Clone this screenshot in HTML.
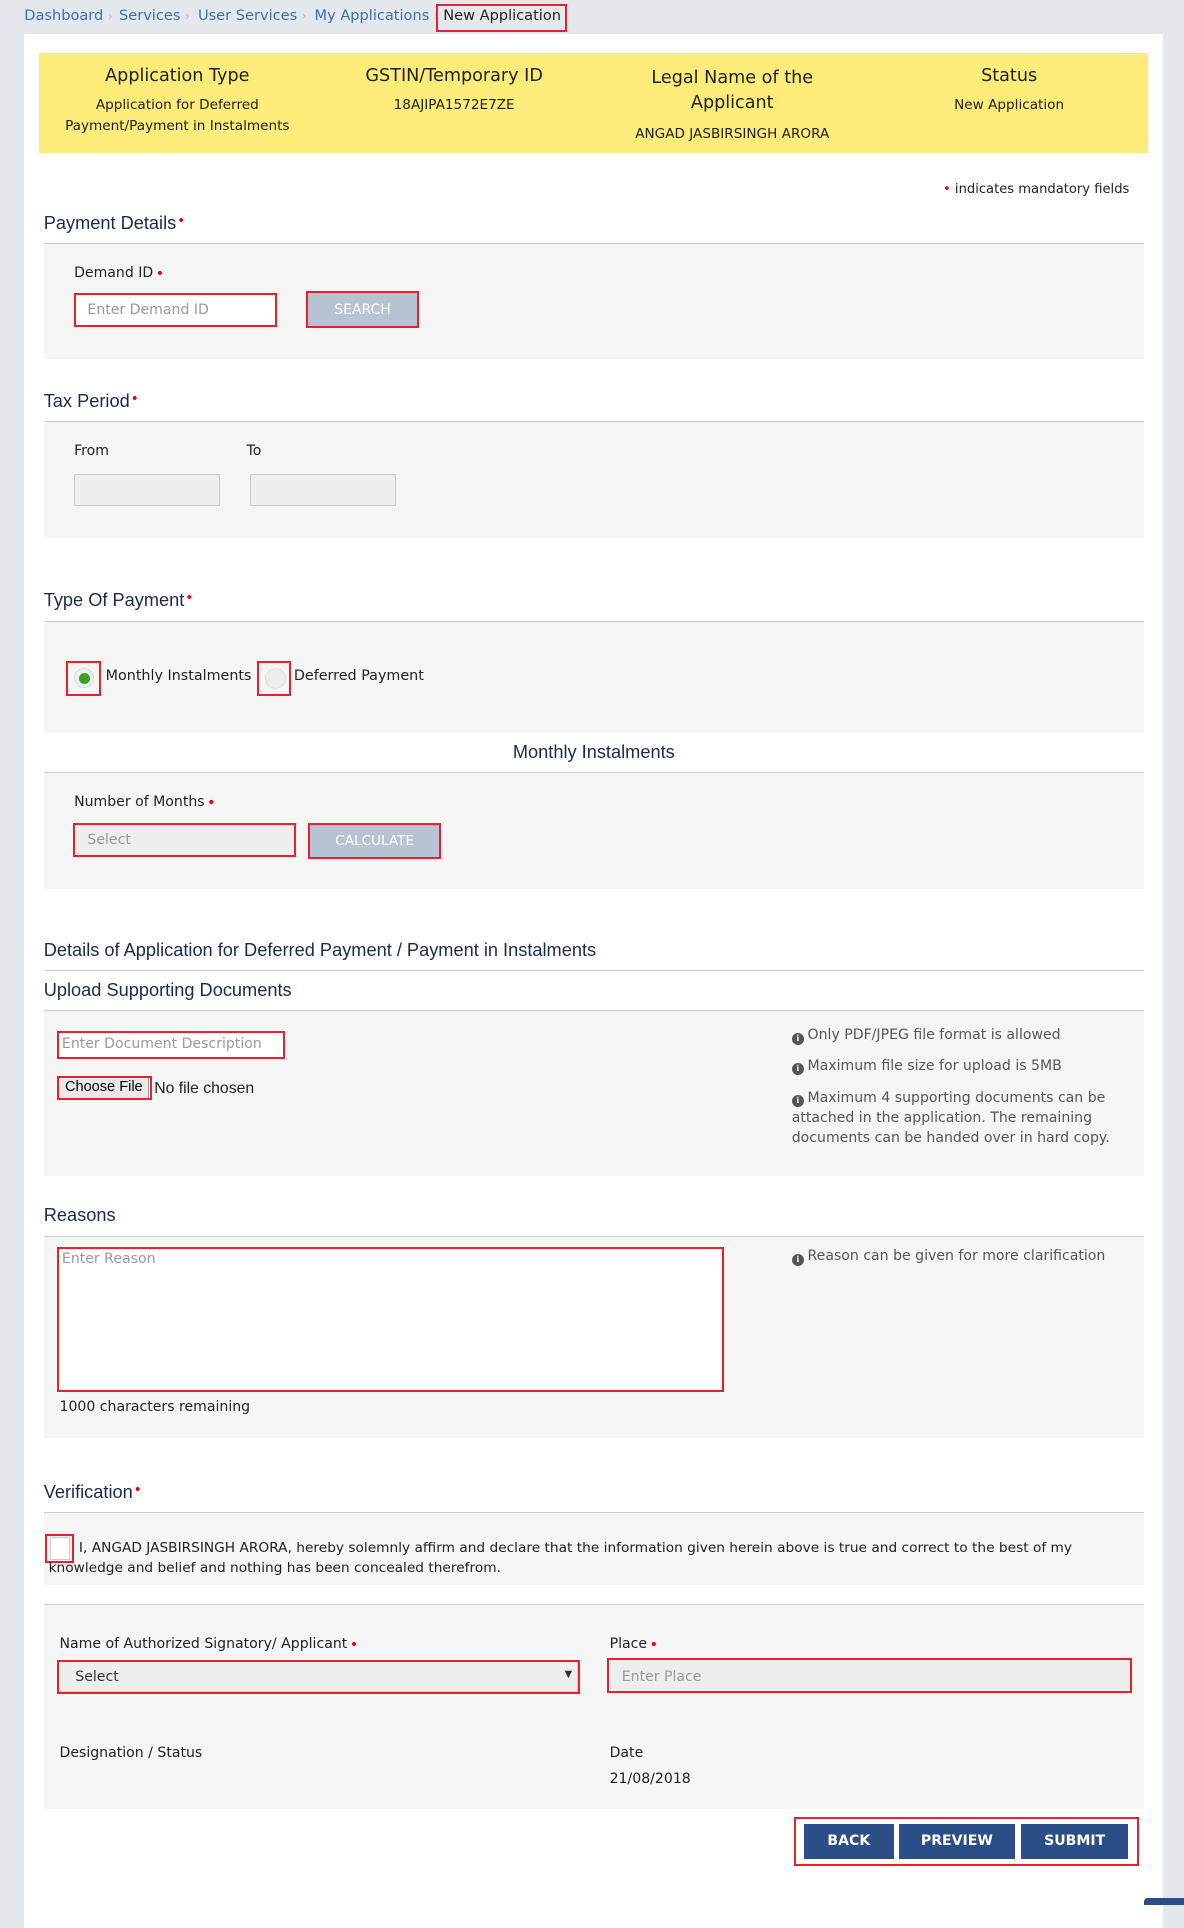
<!DOCTYPE html>
<html><head><meta charset="utf-8"><style>
html,body{margin:0;padding:0}
body{width:975px;height:1568px;zoom:1.21436;background:#e4e7eb;position:relative;overflow:hidden;font-family:"DejaVu Sans",Verdana,sans-serif;font-size:11.6px;color:#333}
.a{position:absolute;white-space:nowrap}
.card{position:absolute;left:20px;top:28px;width:938px;height:1560px;background:#fff}
.h{position:absolute;font-family:"Liberation Sans",Arial,sans-serif;font-size:15px;color:#1a2a4a;left:36px}
.req::after{content:"•";color:#e00;font-size:12px;vertical-align:top;margin-left:2px}
.box{position:absolute;left:36px;width:906px;background:#f5f5f5;border-top:1px solid #ccc}
.line{position:absolute;left:36px;width:906px;border-top:1px solid #ccc}
.red{position:absolute;border:2px solid #e8202a;box-sizing:border-box}
.bc{color:#3c6fae;font-size:12px;top:6px}
.sep{color:#bbb;font-size:10px}
.yc{position:absolute;text-align:center;width:228px;top:0}
.yt{font-size:14.5px;color:#222;margin-top:10px}
.yv{font-size:11.2px;color:#222;margin-top:8px;line-height:17px}
.inp{position:absolute;box-sizing:border-box;background:#eee;border:1px solid #ccc}
.note{font-size:11.6px;color:#555}
.btn{position:absolute;background:#2c4e86;color:#fff;font-size:11.6px;font-weight:bold;text-align:center;line-height:29px;top:1502px;height:29px}
i.ic{display:inline-block;width:10px;height:10px;border-radius:50%;background:#555;color:#fff;font-size:8px;line-height:10px;text-align:center;font-style:normal;font-weight:bold;vertical-align:-1px;margin-right:3px;font-family:"Liberation Serif",serif}
</style></head><body>
<div class="a bc" style="left:20px">Dashboard <span class="sep">›</span></div>
<div class="a bc" style="left:98px">Services <span class="sep">›</span></div>
<div class="a bc" style="left:163px">User Services <span class="sep">›</span></div>
<div class="a bc" style="left:259px">My Applications <span class="sep">›</span></div>
<div class="red" style="left:359px;top:3px;width:108px;height:23px"></div>
<div class="a" style="left:365px;top:6px;font-size:12px;color:#222">New Application</div>
<div class="card"></div>
<div style="position:absolute;left:32px;top:44px;width:913px;height:82px;background:#fdec7a">
 <div class="yc" style="left:0"><div class="yt">Application Type</div><div class="yv">Application for Deferred<br>Payment/Payment in Instalments</div></div>
 <div class="yc" style="left:228px"><div class="yt">GSTIN/Temporary ID</div><div class="yv">18AJIPA1572E7ZE</div></div>
 <div class="yc" style="left:457px"><div class="yt" style="line-height:21px">Legal Name of the<br>Applicant</div><div class="yv" style="margin-top:6px">ANGAD JASBIRSINGH ARORA</div></div>
 <div class="yc" style="left:685px"><div class="yt">Status</div><div class="yv">New Application</div></div>
</div>
<div class="a" style="right:45px;top:150px;font-size:10.8px;color:#222"><span style="color:#e00">•</span> indicates mandatory fields</div>

<div class="h req" style="top:175px">Payment Details</div>
<div class="box" style="top:200px;height:95px"></div>
<div class="a req" style="left:61px;top:218px;color:#222">Demand ID</div>
<div class="inp" style="left:61px;top:241px;width:166px;height:28px;background:#fff"></div>
<div class="red" style="left:61px;top:241px;width:167px;height:28px"></div>
<div class="a" style="left:72px;top:249px;color:#999">Enter Demand ID</div>
<div class="a" style="left:253px;top:241px;width:91px;height:28px;background:#b7c2d3;color:#fff;text-align:center;line-height:28px;font-size:11.5px">SEARCH</div>
<div class="red" style="left:252px;top:240px;width:93px;height:30px"></div>

<div class="h req" style="top:322px">Tax Period</div>
<div class="box" style="top:347px;height:95px"></div>
<div class="a" style="left:61px;top:365px;color:#222">From</div>
<div class="a" style="left:203px;top:365px;color:#222">To</div>
<div class="inp" style="left:61px;top:390px;width:120px;height:27px"></div>
<div class="inp" style="left:206px;top:390px;width:120px;height:27px"></div>

<div class="h req" style="top:486px">Type Of Payment</div>
<div class="box" style="top:511px;height:92px"></div>
<div class="red" style="left:54px;top:544px;width:29px;height:29px"></div>
<div class="a" style="left:61px;top:550px;width:15px;height:15px;border-radius:50%;background:#eee;border:1px solid #cde"></div>
<div class="a" style="left:65px;top:554px;width:9px;height:9px;border-radius:50%;background:#3aa021"></div>
<div class="a" style="left:87px;top:550px;font-size:11.8px;color:#222">Monthly Instalments</div>
<div class="red" style="left:212px;top:544px;width:28px;height:29px"></div>
<div class="a" style="left:218px;top:550px;width:16px;height:16px;border-radius:50%;background:#eee;border:1px solid #ddd"></div>
<div class="a" style="left:242px;top:550px;font-size:11.8px;color:#222">Deferred Payment</div>

<div class="a" style="left:36px;width:906px;text-align:center;top:611px;font-family:'Liberation Sans',Arial,sans-serif;font-size:15px;color:#1a2a4a">Monthly Instalments</div>
<div class="box" style="top:636px;height:95px"></div>
<div class="a req" style="left:61px;top:654px;color:#222">Number of Months</div>
<div class="inp" style="left:60px;top:678px;width:183px;height:27px"></div>
<div class="red" style="left:60px;top:678px;width:184px;height:28px"></div>
<div class="a" style="left:72px;top:685px;color:#999">Select</div>
<div class="a" style="left:255px;top:679px;width:107px;height:27px;background:#b7c2d3;color:#fff;text-align:center;line-height:27px;font-size:11.2px">CALCULATE</div>
<div class="red" style="left:254px;top:678px;width:109px;height:29px"></div>

<div class="h" style="top:774px">Details of Application for Deferred Payment / Payment in Instalments</div>
<div class="line" style="top:799px"></div>
<div class="h" style="top:807px">Upload Supporting Documents</div>
<div class="box" style="top:832px;height:136px"></div>
<div class="inp" style="left:47px;top:849px;width:187px;height:22px;background:#fff;border:none"></div>
<div class="red" style="left:47px;top:849px;width:188px;height:23px"></div>
<div class="a" style="left:51px;top:853px;color:#999">Enter Document Description</div>
<div class="a" style="left:48px;top:887px;width:75px;height:18px;background:#e9e9e9;border:1px solid #999;box-sizing:border-box;font-family:'Liberation Sans',Arial,sans-serif;font-size:12px;text-align:center;line-height:16px;color:#000">Choose File</div>
<div class="red" style="left:47px;top:886px;width:78px;height:20px"></div>
<div class="a" style="left:127px;top:889px;font-family:'Liberation Sans',Arial,sans-serif;font-size:13px;color:#222">No file chosen</div>
<div class="a note" style="left:652px;top:846px"><i class="ic">i</i>Only PDF/JPEG file format is allowed</div>
<div class="a note" style="left:652px;top:871px"><i class="ic">i</i>Maximum file size for upload is 5MB</div>
<div class="a note" style="left:652px;top:896px;line-height:16.5px"><i class="ic">i</i>Maximum 4 supporting documents can be<br>attached in the application. The remaining<br>documents can be handed over in hard copy.</div>

<div class="h" style="top:992px">Reasons</div>
<div class="box" style="top:1018px;height:165px"></div>
<div class="inp" style="left:47px;top:1027px;width:548px;height:118px;background:#fff;border:none"></div>
<div class="red" style="left:47px;top:1027px;width:549px;height:119px"></div>
<div class="a" style="left:51px;top:1030px;color:#999">Enter Reason</div>
<div class="a" style="left:49px;top:1152px;color:#222">1000 characters remaining</div>
<div class="a note" style="left:652px;top:1028px"><i class="ic">i</i>Reason can be given for more clarification</div>

<div class="h req" style="top:1220px">Verification</div>
<div class="box" style="top:1245px;height:59px"></div>
<div class="a" style="left:41px;top:1266px;width:15px;height:17px;background:#fff;border:1px solid #ccc"></div>
<div class="red" style="left:37px;top:1263px;width:24px;height:24px"></div>
<div class="a" style="left:65px;top:1268px;color:#222;font-size:11.3px">I, ANGAD JASBIRSINGH ARORA, hereby solemnly affirm and declare that the information given herein above is true and correct to the best of my</div>
<div class="a" style="left:40px;top:1285px;color:#222;font-size:11.3px">knowledge and belief and nothing has been concealed therefrom.</div>

<div class="box" style="top:1321px;height:168px"></div>
<div class="a req" style="left:49px;top:1347px;color:#222">Name of Authorized Signatory/ Applicant</div>
<div class="inp" style="left:48px;top:1368px;width:428px;height:25px"></div>
<div class="red" style="left:47px;top:1367px;width:431px;height:28px"></div>
<div class="a" style="left:62px;top:1374px;color:#333">Select</div>
<div class="a" style="left:465px;top:1374px;font-size:8px;color:#333">▼</div>
<div class="a req" style="left:502px;top:1347px;color:#222">Place</div>
<div class="inp" style="left:501px;top:1366px;width:430px;height:27px"></div>
<div class="red" style="left:500px;top:1365px;width:432px;height:29px"></div>
<div class="a" style="left:512px;top:1374px;color:#999">Enter Place</div>
<div class="a" style="left:49px;top:1437px;color:#222">Designation / Status</div>
<div class="a" style="left:502px;top:1437px;color:#222">Date</div>
<div class="a" style="left:502px;top:1458px;color:#222">21/08/2018</div>

<div class="red" style="left:654px;top:1496px;width:284px;height:41px"></div>
<div class="btn" style="left:662px;width:74px">BACK</div>
<div class="btn" style="left:740px;width:96px">PREVIEW</div>
<div class="btn" style="left:841px;width:88px">SUBMIT</div>
<div class="a" style="left:942px;top:1563px;width:33px;height:6px;background:#2c4e86;border-radius:3px 0 0 0"></div>
</body></html>
